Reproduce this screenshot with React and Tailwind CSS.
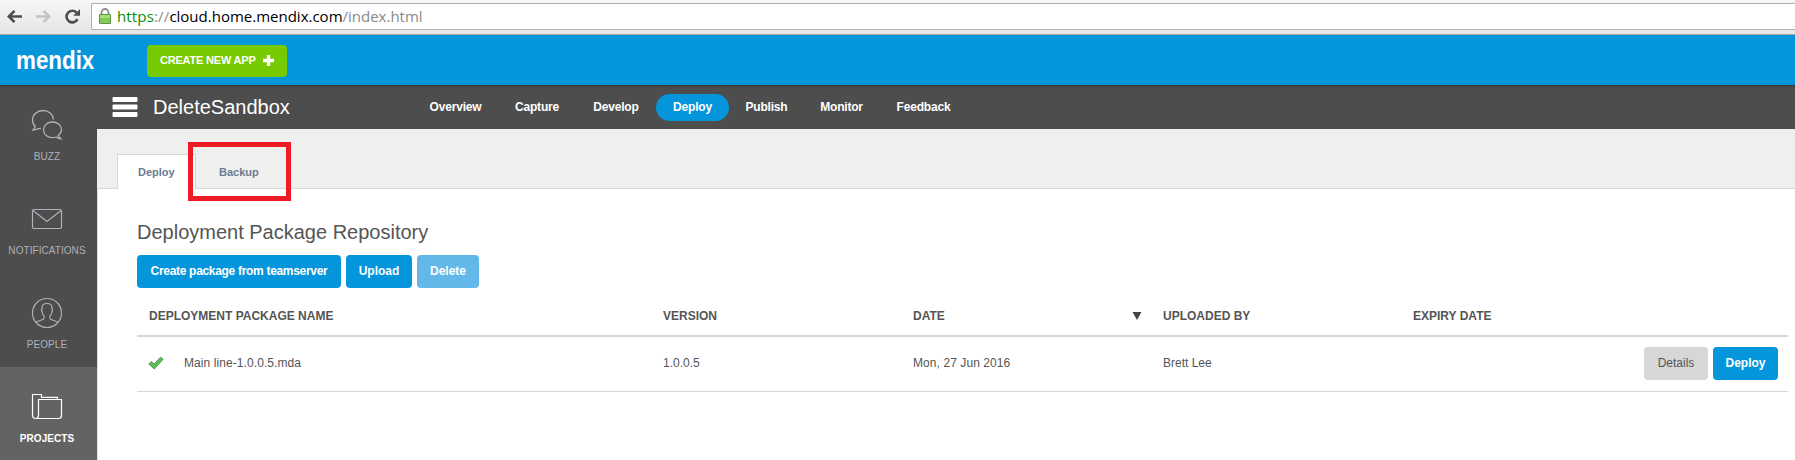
const navItems = [
  { label: 'Overview', width: 'w-[85px]' },
  { label: 'Capture', width: 'w-[78px]' },
  { label: 'Develop', width: 'w-[80px]' },
  { label: 'Deploy', width: 'w-[73px]', active: true },
  { label: 'Publish', width: 'w-[75px]' },
  { label: 'Monitor', width: 'w-[75px]' },
  { label: 'Feedback', width: 'w-[89px]' },
];

function BuzzIcon() {
  return (
    <svg width="32" height="32" viewBox="0 0 32 32" fill="none" stroke="currentColor" strokeWidth="1.3">
      <path d="M22.500 10.500C22 5.200 17.500 1.500 12 1.500 6.200 1.500 1.500 5.600 1.500 11c0 3 1 5 2.900 6.500L2 21c2.600-.2 4.200-1.500 8-1.700" />
      <path d="M27.200 26.500c2-1.500 3.300-3.600 3.300-6 0-4.300-4-7.500-9-7.500s-9 3.200-9 7.800 4 7.900 9 7.900c1.500 0 2.500-.2 3.600-.7 1.400 1.300 3 1.900 5 1.900-1-.9-2.100-1.800-2.900-3.400z" />
    </svg>
  );
}

function MailIcon() {
  return (
    <svg width="32" height="32" viewBox="0 0 32 32" fill="none" stroke="currentColor" strokeWidth="1.2">
      <rect x="1.500" y="6.500" width="29" height="19" rx="1.500" />
      <path d="M2 7.500l14 11 14-11" />
    </svg>
  );
}

function PeopleIcon() {
  return (
    <svg width="32" height="32" viewBox="0 0 32 32" fill="none" stroke="currentColor" strokeWidth="1.2">
      <circle cx="16" cy="16" r="14.500" />
      <path d="M5 25.500c2-1.800 5.500-2 7.200-3.200 1.200-.8 1.300-2 .8-3.300-1.400-1.200-1.900-2.800-2-4.500-.8-.8-.7-2 .1-2.700-.7-4 1.700-5.300 4.900-5.300s5.600 1.300 4.900 5.300c.8.7.9 1.900.1 2.700-.1 1.700-.6 3.300-2 4.500-.5 1.300-.4 2.500.8 3.300 1.700 1.200 5.200 1.400 7.200 3.200" />
    </svg>
  );
}

function ProjectsIcon() {
  return (
    <svg width="32" height="32" viewBox="0 0 32 32" fill="none" stroke="currentColor" strokeWidth="1.200">
      <path d="M4.500 27.500c-2 0-3-1.200-3-3v-21h9v2.800h16v2.200" />
      <path d="M4.500 27.500c2 0 3-1.200 3-3v-16h23v16c0 2-1 3-3 3z" />
    </svg>
  );
}

const sideItems = [
  { label: 'BUZZ', Icon: BuzzIcon },
  { label: 'NOTIFICATIONS', Icon: MailIcon },
  { label: 'PEOPLE', Icon: PeopleIcon },
  { label: 'PROJECTS', Icon: ProjectsIcon, active: true },
];

function BrowserBar() {
  return (
    <div className="flex h-[35px] shrink-0 items-start border-b border-[#a3a3a3] bg-linear-to-b from-[#f7f7f7] to-[#e6e6e6]">
      <div className="flex w-[91px] shrink-0 items-center pt-[8px] pl-[5px]">
        <svg width="80" height="18" viewBox="0 0 80 18" fill="none" strokeWidth="2.600">
          <path d="M17 8.500H4M9.500 2.800L3.800 8.500l5.700 5.700" stroke="#4d4d4d" />
          <path d="M31 8.500h13M38.500 2.800l5.700 5.700-5.700 5.700" stroke="#c4c4c4" />
          <path d="M72.500 11.200A5.800 5.800 0 1 1 71.600 4.700" stroke="#4d4d4d" />
          <path d="M75 1v6.800h-6.800z" fill="#4d4d4d" />
        </svg>
      </div>
      <div className="mt-[3px] flex h-[27px] flex-1 items-center rounded-l-[2px] border border-r-0 border-[#b0b0b0] bg-white pb-[2px] pl-[7px]">
        <svg width="12" height="16" viewBox="0 0 12 16" className="shrink-0">
          <path d="M2.500 8V4.500a3.500 3.500 0 0 1 7 0V8" fill="none" stroke="#8d8d8d" strokeWidth="1.800" />
          <rect x=".5" y="6.500" width="11" height="9" rx=".5" fill="#a5e07a" stroke="#5b8f45" />
          <path d="M1 11.200h10M1 13.400h10" stroke="#7cc653" strokeWidth="2" />
        </svg>
        <span className="ml-[6px] font-['Open_Sans',sans-serif] text-[15px] leading-[20px] whitespace-nowrap text-[#8a8a8a]">
          <span className="tracking-[0.150px]"><span className="text-[#0a8f08]">https</span>://</span><span className="text-black">cloud.home.mendix.com</span>/index.html
        </span>
      </div>
    </div>
  );
}

function Button({ className, children }) {
  return (
    <button className={`h-[33px] rounded-[4px] pb-[1px] text-center text-[12px] leading-[16px] whitespace-nowrap ${className}`}>
      {children}
    </button>
  );
}

export default function App() {
  return (
    <div className="flex h-[460px] w-[1795px] flex-col overflow-hidden bg-white font-['Liberation_Sans',Arial,sans-serif] text-[12px] text-[#555]">
      <BrowserBar />
      <header className="flex h-[50px] shrink-0 items-center bg-[#0595db] text-white">
        <div className="w-[147px] pl-[16px]">
          <span className="inline-block origin-left scale-x-[0.86] text-[26px] leading-[30px] font-bold">mendix</span>
        </div>
        <button className="mt-px flex h-[32px] w-[140px] items-center rounded-[4px] bg-[#76ca02] pl-[13px] text-[11px] font-bold">
          <span className="w-[103px] text-left tracking-[-0.200px] whitespace-nowrap">CREATE NEW APP</span>
          <svg width="11" height="11" viewBox="0 0 11 11"><path d="M5.500 0v11M0 5.500h11" stroke="white" strokeWidth="3.400" /></svg>
        </button>
      </header>
      <div className="flex min-h-0 flex-1">
        <aside className="w-[97px] shrink-0 bg-[#4d4d4d] shadow-[inset_0_2px_2px_-1px_rgba(0,0,0,0.35)]">
          {sideItems.map(({ label, Icon, active }) => (
            <div key={label} className={`flex h-[94px] flex-col items-center pt-[24px] pr-[3px] text-[10px] leading-[12px] ${active ? 'bg-[#636363] font-bold text-white' : 'text-[#b0b0b8]'}`}>
              <Icon />
              <span className="mt-[10px] tracking-[0.060px]">{label}</span>
            </div>
          ))}
        </aside>
        <div className="flex min-w-0 flex-1 flex-col">
          <div className="flex h-[44px] shrink-0 items-center bg-[#4d4d4d] pl-[15px] text-white shadow-[inset_0_2px_2px_-1px_rgba(0,0,0,0.35)]">
            <svg width="26" height="20" viewBox="0 0 26 20" fill="white">
              <rect x=".5" width="25" height="5" rx="1" /><rect x=".5" y="7.500" width="25" height="5" rx="1" /><rect x=".5" y="15" width="25" height="5" rx="1" />
            </svg>
            <h1 className="ml-[15px] w-[260px] text-[20px] leading-[24px]">DeleteSandbox</h1>
            <nav className="flex text-center font-bold tracking-[-0.200px]">
              {navItems.map(({ label, width, active }) => (
                <a key={label} className={`h-[27px] rounded-full leading-[26px] ${width} ${active ? 'bg-[#0595db]' : ''}`}>{label}</a>
              ))}
            </nav>
          </div>
          <div className="relative flex h-[60px] shrink-0 items-end border-b border-[#d7d7d7] bg-[#efefed] pl-[20px] text-[11px] font-bold text-[#6c7b95]">
            <div className="-mb-px h-[35px] w-[79px] border border-b-0 border-[#d7d7d7] bg-white pl-[20px] leading-[34px]">Deploy</div>
            <div className="h-[34px] pl-[23px] leading-[36px]">Backup</div>
            <div className="absolute top-[13px] left-[91px] h-[59px] w-[103px] border-5 border-[#ed1c24]" />
          </div>
          <main className="flex-1 border-l border-[#e0e0e0] pt-[31px] pr-[7px] pl-[39px]">
            <h2 className="text-[20px] leading-[24px]">Deployment Package Repository</h2>
            <div className="mt-[11px] flex gap-[5px] font-bold text-white">
              <Button className="w-[204px] bg-[#0595db] tracking-[-0.310px]">Create package from teamserver</Button>
              <Button className="w-[66px] bg-[#0595db]">Upload</Button>
              <Button className="w-[62px] bg-[#62b9e9]">Delete</Button>
            </div>
            <div className="grid h-[49px] grid-cols-[514px_250px_250px_250px_1fr] items-center border-b-2 border-[#d7d7d7] pt-[8px] pl-[12px] font-bold">
              <span>DEPLOYMENT PACKAGE NAME</span>
              <span>VERSION</span>
              <span className="flex items-center justify-between pr-[21px]">DATE<svg width="10" height="8" viewBox="0 0 10 8"><path d="M.5 0h9L5 8z" fill="#444" /></svg></span>
              <span>UPLOADED BY</span>
              <span>EXPIRY DATE</span>
            </div>
            <div className="grid h-[55px] grid-cols-[514px_250px_250px_250px_1fr] items-center border-b border-[#d7d7d7] pb-[2px] pl-[12px]">
              <span className="flex items-center tracking-[0.080px]">
                <svg width="16" height="14" viewBox="0 0 16 14" className="mr-[20px] -ml-px"><path d="M.8 8L3.500 5.500 6 8 12.500 1.200 15.200 3.200 6.300 13z" fill="#64bd5c" stroke="#3a8f3a" strokeWidth=".8" /></svg>
                Main line-1.0.0.5.mda
              </span>
              <span>1.0.0.5</span>
              <span className="tracking-[0.080px]">Mon, 27 Jun 2016</span>
              <span>Brett Lee</span>
              <span className="flex justify-end gap-[5px] pr-[10px]">
                <Button className="w-[64px] bg-[#d7d7d7]">Details</Button>
                <Button className="w-[65px] bg-[#0595db] font-bold text-white">Deploy</Button>
              </span>
            </div>
          </main>
        </div>
      </div>
    </div>
  );
}
